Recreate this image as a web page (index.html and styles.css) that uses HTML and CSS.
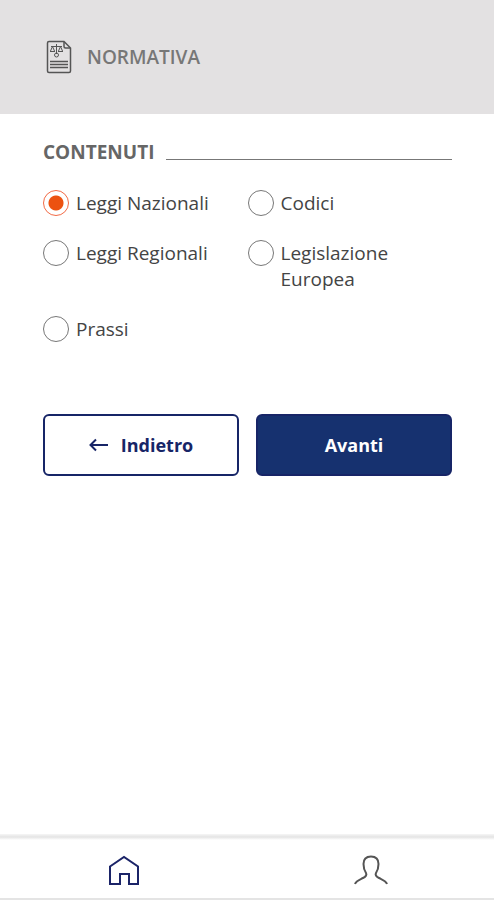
FILE: index.html
```html
<!DOCTYPE html>
<html lang="it">
<head>
<meta charset="utf-8">
<meta name="viewport" content="width=device-width, initial-scale=1">
<title>Normativa</title>
<link rel="stylesheet" href="styles.css">
</head>
<body>
<header class="header">
  <svg class="doc-icon" viewBox="0 0 26 34" aria-hidden="true">
    <path class="doc-line" d="M3 1.500H18L24.500 8V31Q24.500 32.500 23 32.500H3Q1.500 32.500 1.500 31V3Q1.500 1.500 3 1.500Z"/>
    <path class="doc-line" d="M18 2V6.500Q18 8 19.500 8H24"/>
    <path class="doc-rule" d="M4 21.500H22M4 24.500H22M4 27.500H22"/>
    <path class="doc-scales" d="M5 6.500H16M10.500 4V14M6.500 6.500L4.500 11M6.500 6.500L8.500 11M14.500 6.500L12.500 11M14.500 6.500L16.500 11M4 11.500H9M12 11.500H17M8.500 15A2 2 0 1 0 12.500 15A2 2 0 1 0 8.500 15"/>
  </svg>
  <h1 class="title">NORMATIVA</h1>
</header>
<main class="main">
  <form>
    <fieldset class="group" aria-labelledby="contenuti">
      <div class="section-head"><h2 class="section-title" id="contenuti">CONTENUTI</h2></div>
      <div class="options">
        <label class="option"><input class="radio" type="radio" name="contenuto" checked><span>Leggi Nazionali</span></label>
        <label class="option"><input class="radio" type="radio" name="contenuto"><span>Codici</span></label>
        <label class="option"><input class="radio" type="radio" name="contenuto"><span>Leggi Regionali</span></label>
        <label class="option"><input class="radio" type="radio" name="contenuto"><span>Legislazione Europea</span></label>
        <label class="option"><input class="radio" type="radio" name="contenuto"><span>Prassi</span></label>
      </div>
    </fieldset>
    <div class="actions">
      <button class="button" type="button">
        <svg class="arrow" viewBox="0 0 20 14" aria-hidden="true"><path d="M19 7H2M7 1.500L1.500 7L7 12.500"/></svg>
        Indietro
      </button>
      <button class="button button-primary" type="button">Avanti</button>
    </div>
  </form>
</main>
<nav class="tabs">
  <a class="tab tab-active" href="#home" aria-label="Home">
    <svg class="tab-icon" viewBox="0 0 36 32" aria-hidden="true"><path d="M4 12.500L18 3L32 12.500V30H23V20H14V30H4Z"/></svg>
  </a>
  <a class="tab" href="#profilo" aria-label="Profilo">
    <svg class="tab-icon" viewBox="0 0 36 32" aria-hidden="true"><path d="M2 30C3 27 6 26 10 24C13 22.500 14 21 13 19C11 16 10.500 14 10.500 10C10.500 5 13 2.500 18 2.500S25.500 5 25.500 10C25.500 14 25 16 23 19C22 21 23 22.500 26 24C30 26 33 27 34 30"/></svg>
  </a>
</nav>
</body>
</html>
```
FILE: styles.css
```css
* {
  box-sizing: border-box;
}

body {
  display: flex;
  flex-direction: column;
  min-height: 100vh;
  margin: 0;
  background: #fff;
  color: #444;
  font-family: "Open Sans", "Noto Sans", sans-serif;
  font-size: 19px;
  font-weight: 400;
  line-height: 26px;
}

.header {
  display: flex;
  align-items: center;
  gap: 15px;
  padding: 40px 46px;
  background: #e3e1e2;
  color: #777;
}

.doc-icon {
  width: 26px;
  height: 34px;
  fill: none;
  stroke: #555;
}

.doc-line {
  stroke-width: 1.5;
}

.doc-rule {
  stroke-width: 1.5;
}

.doc-scales {
  stroke-width: 1;
}

.title {
  margin: 0;
  font-size: 19px;
  font-weight: 600;
}

.main {
  flex: 1;
  padding: 25px 42px 24px 43px;
}

.group {
  min-width: 0;
  margin: 0;
  padding: 0;
  border: 0;
}

.section-head {
  display: flex;
  align-items: center;
  gap: 12px;
}

.section-head::after {
  content: "";
  flex: 1;
  height: 1px;
  margin-top: 14px;
  background: #777;
}

.section-title {
  margin: 0;
  color: #666;
  font-size: 19px;
  font-weight: 700;
}

.options {
  display: grid;
  grid-template-columns: 1fr 1fr;
  row-gap: 24px;
  margin-top: 25px;
}

.option {
  display: flex;
  align-items: flex-start;
  gap: 7px;
  padding-right: 36px;
  white-space: nowrap;
}

.option span {
  white-space: normal;
}

.radio {
  flex: none;
  appearance: none;
  width: 26px;
  height: 26px;
  margin: 0;
  border: 1px solid #777;
  border-radius: 50%;
}

.radio:checked {
  border-color: #f26a45;
  background: radial-gradient(circle, #ec5210 7px, transparent 8px);
}

.actions {
  display: grid;
  grid-template-columns: 1fr 1fr;
  gap: 17px;
  margin-top: 72px;
}

.button {
  display: flex;
  align-items: center;
  justify-content: center;
  gap: 12px;
  padding: 16px;
  border: 2px solid #172567;
  border-radius: 6px;
  background: #fff;
  color: #172567;
  font: 700 18px/26px "Open Sans", "Noto Sans", sans-serif;
}

.button-primary {
  background: #16316f;
  color: #fff;
}

.arrow {
  width: 20px;
  height: 14px;
  fill: none;
  stroke: currentColor;
  stroke-width: 2;
}

.tabs {
  display: flex;
  border-bottom: 2px solid #e4e4e4;
  background: linear-gradient(#f6f6f6, #e4e4e4 3px, #f6f6f6 5px, #fff 6px);
}

.tab {
  display: flex;
  flex: 1;
  justify-content: center;
  padding: 20px 0 12px;
  color: #555;
}

.tab-active {
  color: #1b2468;
}

.tab-icon {
  width: 36px;
  height: 32px;
  fill: none;
  stroke: currentColor;
  stroke-width: 2;
}
```
